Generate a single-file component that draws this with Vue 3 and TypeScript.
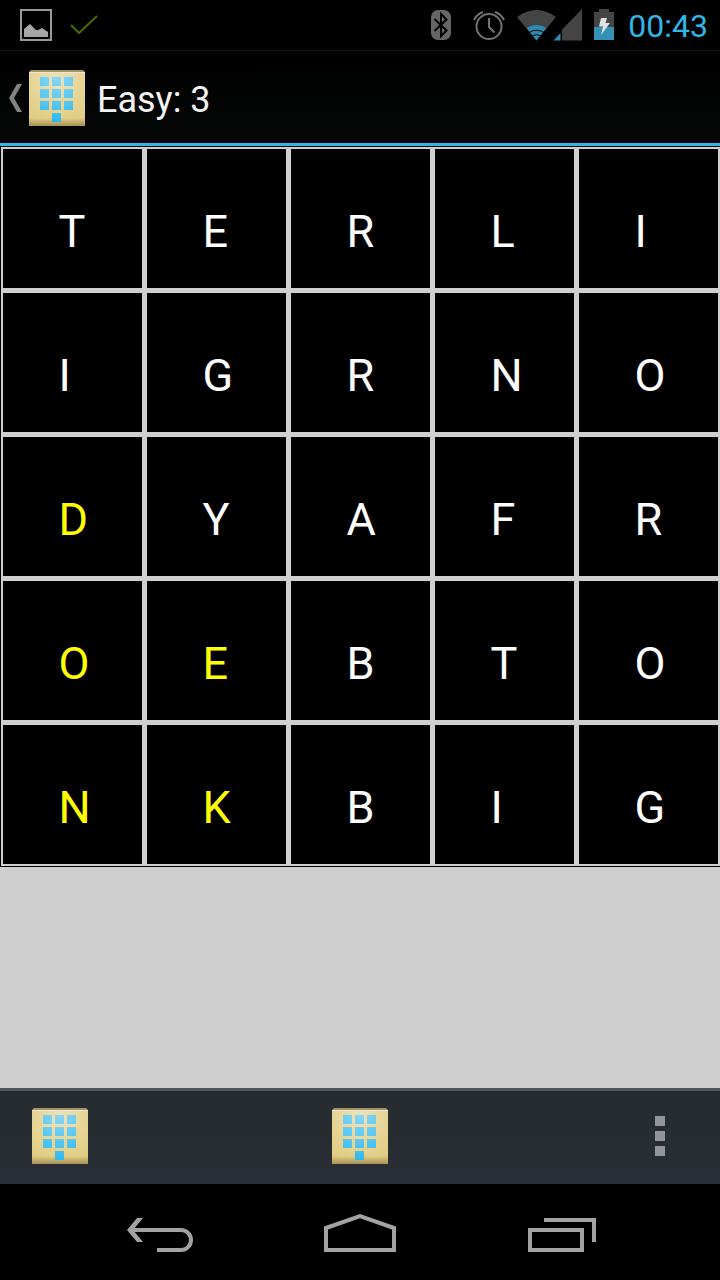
<script setup lang="ts">
import { ref } from 'vue'

interface Tile {
  letter: string
  found: boolean
}

const rows = ['TERLI', 'IGRNO', 'DYAFR', 'OEBTO', 'NKBIG']
const found = new Set([10, 15, 16, 20, 21])
const tiles = ref<Tile[]>(
  rows.join('').split('').map((letter, i) => ({ letter, found: found.has(i) })),
)

function toggle(tile: Tile): void {
  tile.found = !tile.found
}
</script>

<template>
  <div class="screen">
    <svg class="defs" width="0" height="0" aria-hidden="true">
      <defs>
        <radialGradient id="wall" cx="0.5" cy="0.15" r="0.95">
          <stop offset="0" stop-color="#eee2bd" />
          <stop offset="0.5" stop-color="#e6d494" />
          <stop offset="1" stop-color="#dfca7c" />
        </radialGradient>
        <linearGradient id="shade" x1="0" y1="0" x2="0" y2="1">
          <stop offset="0" stop-color="#8d7a48" stop-opacity="0" />
          <stop offset="1" stop-color="#8d7a48" stop-opacity="0.7" />
        </linearGradient>
        <radialGradient id="glass" gradientUnits="userSpaceOnUse" cx="28" cy="6" r="46">
          <stop offset="0" stop-color="#8bd6f5" />
          <stop offset="0.5" stop-color="#5fcaf4" />
          <stop offset="1" stop-color="#30b8ee" />
        </radialGradient>
        <symbol id="building" viewBox="0 0 56 56">
          <rect y="2" width="56" height="54" fill="url(#wall)" />
          <path d="M2 0H54L56 2H0Z" fill="#a39467" />
          <rect y="2" width="56" height="1" fill="#eee6cf" />
          <rect y="48" width="56" height="8" fill="url(#shade)" />
          <path
            d="M11 7h9v9h-9zM23 7h9v9h-9zM35 7h9v9h-9zM11 19h9v9h-9zM23 19h9v9h-9zM35 19h9v9h-9zM11 31h9v9h-9zM23 31h9v9h-9zM35 31h9v9h-9zM23 43h9v9h-9z"
            fill="url(#glass)"
          />
        </symbol>
      </defs>
    </svg>

    <div class="status">
      <div class="notices">
        <svg width="32" height="32" viewBox="0 0 32 32" aria-label="Screenshot saved" role="img">
          <rect x="1" y="1" width="30" height="30" fill="none" stroke="#9a9a9a" stroke-width="2" />
          <path d="M4 28V20L10 15 16 21 18 21 22 19 28 23V28Z" fill="#a6a6a6" />
        </svg>
        <svg width="28" height="20" viewBox="0 0 28 20" aria-label="Done" role="img">
          <path d="M1 10L9 18 27 1" fill="none" stroke="#476a00" stroke-width="2" />
        </svg>
      </div>
      <div class="indicators">
        <svg class="bluetooth" width="20" height="32" viewBox="0 0 20 32" aria-label="Bluetooth" role="img">
          <rect y="1" width="20" height="30" rx="7" fill="#666" />
          <path d="M3.500 10L15.500 21.500 10 27V5L15.500 10.500 3.500 22" fill="none" stroke="#000" stroke-width="2" />
        </svg>
        <svg class="alarm" width="32" height="32" viewBox="0 0 32 32" aria-label="Alarm" role="img">
          <g fill="none" stroke="#737373" stroke-width="2">
            <circle cx="16" cy="17.500" r="12.500" />
            <path d="M16 9V18L21.500 23.500M1 11Q4 5 10 3M31 11Q28 5 22 3" />
          </g>
        </svg>
        <svg class="network" width="65" height="32" viewBox="0 0 65 32" aria-label="Wi-Fi and mobile signal" role="img">
          <path d="M0 8Q19.500 -6 39 8L19.500 31.500Z" fill="#444" />
          <path d="M9.500 19Q19.500 13 29.500 19L19.500 31.500Z" fill="#2d8bb0" />
          <path d="M12 23.500Q19.500 19 27 23.500M15 27Q19.500 24 24 27" fill="none" stroke="#000" stroke-width="1" />
          <path d="M65 0V31.500H45V20.500Z" fill="#444" />
          <path d="M43.500 24V31.500H36.500Z" fill="#2d8bb0" />
        </svg>
        <svg class="battery" width="20" height="32" viewBox="0 0 20 32" aria-label="Battery charging" role="img">
          <path d="M5 0H15V3H20V19H0V3H5Z" fill="#444" />
          <rect y="18" width="20" height="13" fill="#3391b8" />
          <path d="M7 9H13L11.500 14H16L7 26 9 17.500H5Z" fill="#e2e2e2" />
        </svg>
        <time class="clock">00:43</time>
      </div>
    </div>

    <header class="bar">
      <button class="up" type="button" aria-label="Navigate up">
        <svg width="29" height="56" viewBox="0 0 29 56">
          <path d="M17 14H22L14 28 22 42H17L9 28Z" fill="#828383" />
        </svg>
        <svg width="56" height="56"><use href="#building" /></svg>
      </button>
      <h1 class="title">Easy: 3</h1>
    </header>

    <main class="content">
      <div class="board">
        <div class="grid">
          <button
            v-for="(tile, i) in tiles"
            :key="i"
            type="button"
            class="tile"
            :class="{ found: tile.found }"
            @click="toggle(tile)"
          >
            {{ tile.letter }}
          </button>
        </div>
      </div>
    </main>

    <div class="actions">
      <button type="button" aria-label="Previous">
        <svg width="56" height="56"><use href="#building" /></svg>
      </button>
      <button type="button" aria-label="Next">
        <svg width="56" height="56"><use href="#building" /></svg>
      </button>
      <button type="button" aria-label="More options">
        <svg width="10" height="40" viewBox="0 0 10 40">
          <path d="M0 0h10v10H0zM0 15h10v10H0zM0 30h10v10H0z" fill="#939598" />
        </svg>
      </button>
    </div>

    <nav class="system">
      <button type="button" aria-label="Back">
        <svg width="72" height="48" viewBox="0 0 72 48">
          <path d="M6 22H57a10 10 0 0 1 0 20H33" fill="none" stroke="#a3a3a3" stroke-width="4" />
          <path d="M3 22L13 10H19L9 22 19 34H13Z" fill="#a3a3a3" />
        </svg>
      </button>
      <button type="button" aria-label="Home">
        <svg width="72" height="48" viewBox="0 0 72 48">
          <path d="M2 20L36 8 70 20V42H2Z" fill="none" stroke="#a3a3a3" stroke-width="4" />
        </svg>
      </button>
      <button type="button" aria-label="Recent apps">
        <svg width="72" height="48" viewBox="0 0 72 48">
          <path d="M6 22H58V42H6ZM20 12H70V34" fill="none" stroke="#a3a3a3" stroke-width="4" />
        </svg>
      </button>
    </nav>
  </div>
</template>

<style>
body {
  margin: 0;
  background: #000;
}
</style>

<style scoped>
.screen {
  display: flex;
  flex-direction: column;
  min-height: 100vh;
  background: #000;
  color: #f3f3f3;
  font-family: Roboto, "Noto Sans", sans-serif;
}

.defs {
  position: absolute;
}

svg {
  display: block;
  flex: none;
}

button {
  margin: 0;
  padding: 0;
  border: 0;
  background: none;
  color: inherit;
  font: inherit;
  cursor: pointer;
}

.status {
  display: flex;
  align-items: center;
  justify-content: space-between;
  height: 50px;
  padding: 0 12px 0 20px;
}

.notices,
.indicators {
  display: flex;
  align-items: center;
}

.notices {
  gap: 18px;
}

.bluetooth {
  margin-right: 22px;
}

.alarm,
.network {
  margin-right: 12px;
}

.battery {
  margin-right: 14px;
}

.clock {
  padding-top: 2px;
  color: #33b5e5;
  font-size: 32px;
  line-height: 48px;
}

.bar {
  display: flex;
  align-items: center;
  gap: 12px;
  box-sizing: border-box;
  height: 96px;
  border-top: 1px solid #161616;
  border-bottom: 3px solid #33b5e5;
  padding-top: 2px;
  background: linear-gradient(#000, #050707);
}

.up {
  display: flex;
}

.title {
  margin: 0;
  padding-top: 4px;
  font-size: 36px;
  font-weight: 400;
  line-height: 48px;
}

.content {
  flex: 1;
  background: #cfcfcf;
}

.board {
  padding: 1px 0 1px 1px;
  background: #000;
}

.grid {
  display: grid;
  grid-template-columns: repeat(5, 1fr);
  gap: 5px;
  padding: 2px;
  background: #cfcfcf;
}

.tile {
  aspect-ratio: 1;
  padding: 26px 0 0 40%;
  background: #000;
  color: #fff;
  font-size: 45px;
  line-height: 48px;
  text-align: left;
}

.tile.found {
  color: #ff0;
}

.actions,
.system {
  display: flex;
  justify-content: space-between;
  height: 96px;
}

.actions {
  background: linear-gradient(#51575a 3px, #262c2f 3px, #292d35);
}

.actions button {
  display: grid;
  place-items: center;
  width: 120px;
}

.system {
  justify-content: center;
}

.system button {
  display: grid;
  place-items: center;
  flex: 0 1 200px;
}
</style>
